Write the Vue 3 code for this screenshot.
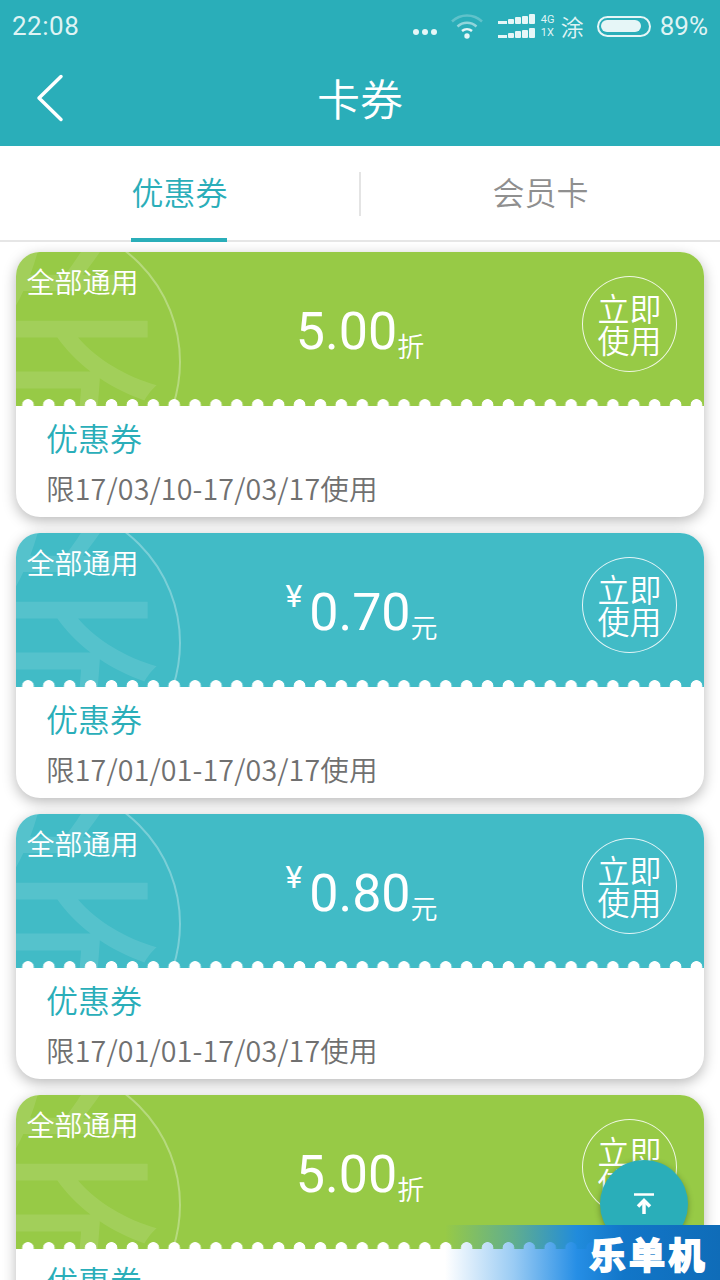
<script setup>
const coupons = [
  { color: 'green', value: '5.00', unit: '折', date: '限17/03/10-17/03/17使用' },
  { color: 'teal', yen: true, value: '0.70', unit: '元', date: '限17/01/01-17/03/17使用' },
  { color: 'teal', yen: true, value: '0.80', unit: '元', date: '限17/01/01-17/03/17使用' },
  { color: 'green', value: '5.00', unit: '折', date: '限17/03/10-17/03/17使用' }
]
</script>

<template>
  <div class="page">
    <header class="top">
      <div class="status">
        <span class="time">22:08</span>
        <div class="status-right">
          <svg class="dots" width="26" height="8" viewBox="0 0 26 8"><circle cx="4" cy="4" r="3" /><circle cx="13" cy="4" r="3" /><circle cx="22" cy="4" r="3" /></svg>
          <svg class="wifi" width="34" height="26" viewBox="0 0 34 26" fill="none">
            <path d="M2 8.500C10.500 0.500 23.500 0.500 32 8.500" stroke="#fff" stroke-opacity=".25" stroke-width="2.500" />
            <path d="M7.500 13.500C13 8.500 21 8.500 26.500 13.500" stroke="#e6f6f7" stroke-opacity=".55" stroke-width="2.500" />
            <path d="M12 18C15 15.500 19 15.500 22 18" stroke="#e6f6f7" stroke-width="2.500" />
            <circle cx="17" cy="23" r="2.700" fill="#e6f6f7" />
          </svg>
          <svg class="signal" width="37" height="24" viewBox="0 0 37 24" fill="#e6f6f7">
            <rect x="0" y="7" width="9" height="3" /><rect x="10" y="5" width="6" height="5" rx="1" /><rect x="17" y="3" width="6" height="7" rx="1" /><rect x="24" y="2" width="6" height="8" rx="1" /><rect x="31" y="0" width="6" height="10" rx="1" />
            <rect x="0" y="21" width="9" height="3" /><rect x="10" y="19" width="6" height="5" rx="1" /><rect x="17" y="17" width="6" height="7" rx="1" /><rect x="24" y="16" width="6" height="8" rx="1" /><rect x="31" y="14" width="6" height="10" rx="1" />
          </svg>
          <span class="net"><span>4G</span><span>1X</span></span>
          <span class="carrier">涂</span>
          <span class="battery"><i></i></span>
          <span class="pct">89%</span>
        </div>
      </div>
      <div class="navbar">
        <svg class="back" width="30" height="50" viewBox="0 0 30 50" fill="none"><path d="M26 3.500L4 25L26 46.500" stroke="#fff" stroke-width="3.500" stroke-linecap="round" stroke-linejoin="round" /></svg>
        <h1>卡券</h1>
      </div>
    </header>

    <nav class="tabs">
      <div class="tab active"><span>优惠券</span></div>
      <div class="sep"></div>
      <div class="tab"><span>会员卡</span></div>
    </nav>

    <main class="list">
      <article v-for="(c, i) in coupons" :key="i" class="card">
        <div class="banner" :class="c.color">
          <div class="mark" aria-hidden="true"><span>券</span></div>
          <div class="scope">全部通用</div>
          <div class="amount">
            <span v-if="c.yen" class="yen">¥</span>
            <span class="value">{{ c.value }}</span>
            <span class="unit">{{ c.unit }}</span>
          </div>
          <div class="use"><span>立即</span><span>使用</span></div>
        </div>
        <div class="info">
          <div class="name">优惠券</div>
          <div class="date">{{ c.date }}</div>
        </div>
      </article>
    </main>

    <div class="fab">
      <svg width="20" height="22" viewBox="0 0 20 22" fill="none" stroke="#fff" stroke-width="3.500">
        <path d="M0 1.500H20" stroke-width="2.500" />
        <path d="M10 21V8" />
        <path d="M4 13.500L10 7.500L16 13.500" />
      </svg>
    </div>
    <div class="brand"><span>乐单机</span></div>
  </div>
</template>

<style>
html, body { margin: 0; background: #fff; }
</style>

<style scoped>
.page {
  position: relative;
  width: 720px;
  height: 1280px;
  overflow: hidden;
  background: #fff;
  font-family: "Noto Sans CJK SC", "Noto Sans", sans-serif;
  font-weight: 350;
}
.top { background: #2aaeb9; height: 146px; display: flex; flex-direction: column; }
.status {
  height: 50px;
  display: flex;
  align-items: center;
  justify-content: space-between;
  padding: 2px 12px 0 12px;
  box-sizing: border-box;
  color: #dff3f4;
}
.time { font: 26px/1 Roboto, sans-serif; letter-spacing: .5px; }
.status-right { display: flex; align-items: center; }
.dots { fill: #e6f6f7; margin-top: 12px; margin-right: 12px; }
.wifi { margin-right: 14px; margin-top: -1px; }
.signal { margin-top: 0; margin-right: 6px; }
.net { display: flex; flex-direction: column; font: 11px/13px Roboto, sans-serif; width: 18px; margin-right: 2px; }
.carrier { font-size: 23px; line-height: 1; margin-right: 13px; }
.battery {
  width: 54px;
  height: 21px;
  border: 2px solid #e6f6f7;
  border-radius: 11px;
  box-sizing: border-box;
  padding: 2.500px;
  display: block;
  margin-right: 9px;
}
.battery i { display: block; height: 100%; width: 89%; background: #e6f6f7; border-radius: 6px; }
.pct { font: 26px/1 Roboto, sans-serif; }
.navbar { flex: 1; position: relative; display: flex; align-items: center; justify-content: center; }
.navbar h1 { margin: -2px 0 0; font-size: 43px; font-weight: 350; color: #fff; line-height: 1; }
.back { position: absolute; left: 35px; top: 23px; }

.tabs {
  height: 96px;
  box-sizing: border-box;
  border-bottom: 2px solid #e6e6e6;
  display: flex;
  align-items: center;
}
.tab {
  flex: 1;
  height: 96px;
  display: flex;
  justify-content: center;
  align-items: center;
  font-size: 32px;
  color: #8f8f8f;
  position: relative;
  top: 1px;
}
.tab span { position: relative; top: -3px; }
.tab.active { color: #2aaeb9; }
.tab.active::after {
  content: "";
  position: absolute;
  left: 131px;
  width: 96px;
  bottom: 0;
  height: 4px;
  background: #2aaeb9;
}
.sep { width: 2px; height: 44px; background: #e4e4e4; margin-top: 2px; }

.list { padding: 10px 16px 0; display: flex; flex-direction: column; gap: 16px; }
.card {
  height: 265px;
  flex: none;
  border-radius: 24px;
  background: #fff;
  box-shadow: 0 4px 14px rgba(0, 0, 0, .28);
  overflow: hidden;
  display: flex;
  flex-direction: column;
}
.banner {
  position: relative;
  height: 154px;
  flex: none;
  display: grid;
  grid-template-columns: 1fr auto 1fr;
  overflow: hidden;
  color: #fff;
}
.banner.green { background: #97ca46; }
.banner.teal { background: #41bbc6; }
.banner::after {
  content: "";
  position: absolute;
  left: 0;
  right: 0;
  bottom: 0;
  height: 7px;
  background-image: radial-gradient(circle at 10.450px 6px, #fff 5.500px, rgba(255, 255, 255, 0) 6.200px);
  background-size: 20.900px 7px;
  background-position: 1.500px 0;
  background-repeat: repeat-x;
}
.mark {
  position: absolute;
  left: -117px;
  top: -31px;
  width: 282px;
  height: 282px;
  border-radius: 50%;
  border: 2px solid rgba(255, 255, 255, .3);
  box-sizing: border-box;
}
.mark span {
  position: absolute;
  left: -14px;
  top: -29px;
  width: 282px;
  text-align: center;
  font-size: 272px;
  font-weight: 350;
  line-height: 282px;
  color: rgba(255, 255, 255, .11);
}
.scope { position: relative; padding: 11px 0 0 10.500px; font-size: 28px; line-height: 36px; white-space: nowrap; }
.amount { position: relative; display: flex; align-items: baseline; padding-top: 50px; line-height: 60px; height: 60px; white-space: nowrap; }
.yen { font: 32px/1 Roboto, sans-serif; align-self: flex-start; margin: -3px 7px 0 3px; }
.value { font: 400 52px/60px Roboto, sans-serif; }
.unit { font-size: 27px; line-height: 1; margin: 0 0 3px 0; align-self: flex-end; }
.use {
  position: relative;
  justify-self: end;
  margin: 24px 27px 0 0;
  width: 95px;
  height: 96px;
  border: 1.500px solid rgba(255, 255, 255, .85);
  border-radius: 50%;
  box-sizing: border-box;
  display: flex;
  flex-direction: column;
  align-items: center;
  justify-content: center;
  font-size: 32px;
  line-height: 32px;
}
.use span { display: block; position: relative; top: -1px; }
.info { padding: 11px 0 0 30px; }
.name { font-size: 32px; line-height: 40px; color: #2aaeb9; }
.date { font-size: 28.600px; letter-spacing: .15px; line-height: 36px; color: #707070; margin-top: 13px; white-space: nowrap; }

.fab {
  position: absolute;
  left: 600px;
  top: 1160px;
  width: 88px;
  height: 88px;
  border-radius: 50%;
  background: #2aaeb9;
  box-shadow: 0 2px 6px rgba(0, 0, 0, .3);
  display: flex;
  justify-content: center;
  align-items: center;
}
.brand {
  position: absolute;
  left: 445px;
  right: 0;
  top: 1225px;
  height: 55px;
  background: linear-gradient(90deg, rgba(30, 140, 230, 0) 0%, rgba(30, 140, 230, .45) 25%, rgba(26, 136, 228, .95) 48%, #1276c8 65%, #0f6cb8 100%);
  display: flex;
  justify-content: flex-end;
  align-items: center;
  padding-right: 12px;
  box-sizing: border-box;
}
.brand span {
  color: #fff;
  font-size: 36px;
  font-weight: 700;
  letter-spacing: 3.500px;
  -webkit-text-stroke: 2px #fff;
  line-height: 1;
}
</style>
